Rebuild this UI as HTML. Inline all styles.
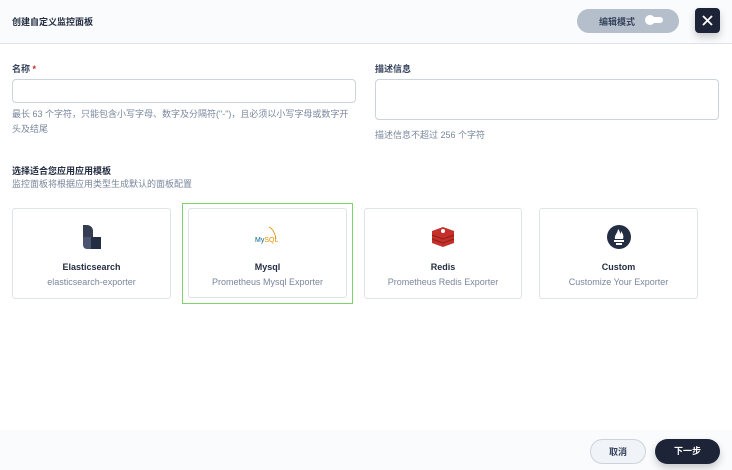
<!DOCTYPE html>
<html><head><meta charset="utf-8"><style>
*{margin:0;padding:0;box-sizing:border-box}
body{width:732px;height:470px;background:#fff;font-family:"Liberation Sans","Noto Sans CJK SC",sans-serif;color:#242e42;position:relative;overflow:hidden;font-size:9px}
.hd{position:absolute;left:0;top:0;width:732px;height:44px;background:#f9fbfd;border-bottom:1px solid #dfe3ea}
.t{position:absolute;left:12px;top:15px;font-size:9px;font-weight:bold}
.em{position:absolute;left:577px;top:9px;width:102px;height:24px;border-radius:12px;background:#b5bfcb;font-size:9px;font-weight:bold;color:#36435c;padding:6px 0 0 22px}
.tg{position:absolute;left:650px;top:17px;width:13px;height:6px;border-radius:3px;background:#fff}
.tg:before{content:"";position:absolute;left:-5px;top:-2px;width:10px;height:10px;border-radius:5px;background:#fff}
.x{position:absolute;left:695px;top:8px;width:25px;height:25px;border-radius:4px;background:#1e2437;box-shadow:0 4px 8px rgba(0,0,0,.2)}
.lb{position:absolute;font-size:9px;font-weight:bold;color:#36435c}
.in{position:absolute;border:1px solid #ccd3db;border-radius:4px;background:#fff}
.hint{position:absolute;font-size:9px;color:#79879c;line-height:15px}
.c{position:absolute;top:208px;height:91px;border:1px solid #dfe3ea;border-radius:3px;background:#fff;text-align:center}
.c b{position:absolute;left:0;right:0;top:53px;font-size:9px;color:#242e42}
.c span{position:absolute;left:0;right:0;top:68px;font-size:9px;color:#79879c}
.c svg{position:absolute;left:50%;top:16px;transform:translateX(-50%)}
.ft{position:absolute;left:0;top:430px;width:732px;height:40px;background:#f9fbfd}
.bt{position:absolute;top:439px;height:25px;border-radius:13px;font-size:9px;font-weight:bold;text-align:center;line-height:24px}
</style></head><body>
<div class="hd"><div class="t">创建自定义监控面板</div>
<div class="em">编辑模式</div><div class="tg"></div>
<div class="x"><svg width="25" height="25"><path d="M8 8L17 17M17 8L8 17" stroke="#fff" stroke-width="1.8"/></svg></div></div>

<div class="lb" style="left:12px;top:62px">名称 <span style="color:#ca2621">*</span></div>
<div class="in" style="left:12px;top:79px;width:344px;height:24px"></div>
<div class="hint" style="left:12px;top:107px;width:338px">最长 63 个字符，只能包含小写字母、数字及分隔符("-")，且必须以小写字母或数字开头及结尾</div>
<div class="lb" style="left:375px;top:62px">描述信息</div>
<div class="in" style="left:375px;top:79px;width:344px;height:41px"></div>
<div class="hint" style="left:375px;top:128px">描述信息不超过 256 个字符</div>
<div class="lb" style="left:12px;top:164px;color:#242e42">选择适合您应用应用模板</div>
<div class="hint" style="left:12px;top:177px">监控面板将根据应用类型生成默认的面板配置</div>

<div style="position:absolute;left:182px;top:203px;width:171px;height:101px;border:1px solid #7ed36a"></div>
<div class="c" style="left:12px;width:159px"><svg width="20" height="24" viewBox="0 0 20 24"><path d="M1 0h4a6 6 0 0 1 6 6v6H1z" fill="#343d52"/><path d="M1 12h8v12H5a4 4 0 0 1-4-4z" fill="#4a5470"/><path d="M9 12h10v12H9z" fill="#242e42"/></svg><b>Elasticsearch</b><span>elasticsearch-exporter</span></div>
<div class="c" style="left:188px;width:159px;top:208px;height:90px"><svg width="26" height="22" viewBox="0 0 26 22"><path d="M14 2c4 2 6 6 7 12" stroke="#e48e00" fill="none" stroke-width=".8"/><text x="0" y="17" font-size="7" font-family="Liberation Sans" fill="#00618a">My<tspan fill="#e48e00">SQL</tspan></text></svg><b>Mysql</b><span>Prometheus Mysql Exporter</span></div>
<div class="c" style="left:364px;width:158px"><svg width="26" height="22" viewBox="0 0 26 22"><path d="M13 2l11 4v12l-11 4-11-4V6z" fill="#c6302b"/><path d="M2 10l11 4 11-4M2 14l11 4 11-4" stroke="#8f1c18" fill="none"/><circle cx="13" cy="6" r="2" fill="#fff"/></svg><b>Redis</b><span>Prometheus Redis Exporter</span></div>
<div class="c" style="left:539px;width:159px"><svg width="24" height="24" viewBox="0 0 24 24"><circle cx="12" cy="12" r="12" fill="#242e42"/><path d="M7 15h10v2H7zM9 18h6v2H9zM8 14c-1-4 3-6 3-10 2 2 2 4 2 5 1-1 1-2 1-3 2 3 3 5 2 8z" fill="#fff"/></svg><b>Custom</b><span>Customize Your Exporter</span></div>

<div class="ft"></div>
<div class="bt" style="left:590px;width:56px;border:1px solid #ccd3db;background:#f0f3f7;color:#36435c">取消</div>
<div class="bt" style="left:655px;width:65px;background:#1e2437;color:#fff;box-shadow:0 4px 8px rgba(0,0,0,.2)">下一步</div>
</body></html>
